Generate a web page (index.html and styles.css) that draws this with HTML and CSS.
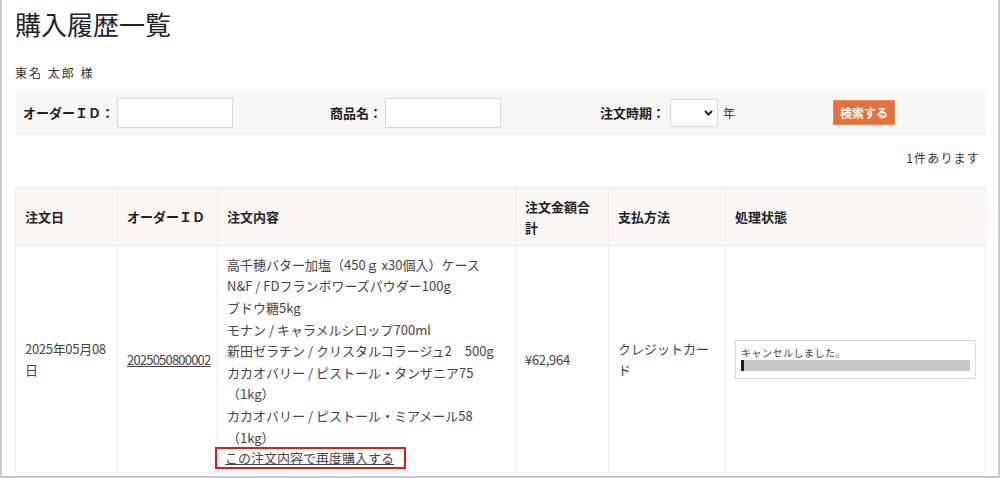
FILE: index.html
```html
<!DOCTYPE html>
<html lang="ja">
<head>
    <meta charset="UTF-8">
    <meta name="viewport" content="width=device-width, initial-scale=1.0">
    <title>購入履歴一覧</title>
    <link rel="stylesheet" href="styles.css">
</head>
<body>
    <div class="frame">
        <h1 class="page-title">購入履歴一覧</h1>
        <p class="customer">東名 太郎 様</p>

        <form class="search">
            <div class="field">
                <label>オーダーＩＤ：</label>
                <input type="text" class="text-input">
            </div>
            <div class="field">
                <label>商品名：</label>
                <input type="text" class="text-input">
            </div>
            <div class="field">
                <label>注文時期：</label>
                <span class="select-wrap">
                    <select class="year-select"><option></option></select>
                    <svg class="chevron" width="9" height="6" viewBox="0 0 9 6"><path d="M1 1l3.5 3.5L8 1" fill="none" stroke="#222" stroke-width="2"/></svg>
                </span>
                <span class="unit">年</span>
            </div>
            <div class="field">
                <button type="button" class="search-btn">検索する</button>
            </div>
        </form>

        <p class="count">1件あります</p>

        <table class="history">
            <colgroup>
                <col style="width:102px">
                <col style="width:100px">
                <col style="width:298px">
                <col style="width:93px">
                <col style="width:117px">
                <col>
            </colgroup>
            <thead>
                <tr>
                    <th>注文日</th>
                    <th>オーダーＩＤ</th>
                    <th>注文内容</th>
                    <th>注文金額合計</th>
                    <th>支払方法</th>
                    <th>処理状態</th>
                </tr>
            </thead>
            <tbody>
                <tr>
                    <td class="date">2025年05月08日</td>
                    <td><a href="#" class="order-link">2025050800002</a></td>
                    <td class="items">
                        <ul class="item-list">
                            <li>高千穂バター加塩（450ｇ x30個入）ケース</li>
                            <li>N&amp;F / FDフランボワーズパウダー100g</li>
                            <li>ブドウ糖5kg</li>
                            <li>モナン / キャラメルシロップ700ml</li>
                            <li>新田ゼラチン / クリスタルコラージュ2　500g</li>
                            <li>カカオバリー / ピストール・タンザニア75（1kg）</li>
                            <li>カカオバリー / ピストール・ミアメール58（1kg）</li>
                        </ul>
                        <a href="#" class="reorder">この注文内容で再度購入する</a>
                    </td>
                    <td class="price">¥62,964</td>
                    <td>クレジットカード</td>
                    <td>
                        <div class="status">
                            <p class="status-text">キャンセルしました。</p>
                            <div class="progress"><span class="progress-fill"></span></div>
                        </div>
                    </td>
                </tr>
            </tbody>
        </table>
    </div>
</body>
</html>
```

FILE: styles.css
```css
* {
    margin: 0;
    padding: 0;
    box-sizing: border-box;
}

body {
    font-family: "Noto Sans CJK JP", "Noto Sans", sans-serif;
    color: #333;
    background: #fff;
}

a {
    color: inherit;
}

.frame {
    width: 1000px;
    height: 478px;
    border: 2px solid #c8c8c8;
    border-top: none;
    padding: 0 12px 0 13px;
    overflow: hidden;
}

.page-title {
    padding-top: 8px;
    font-size: 26px;
    font-weight: normal;
    line-height: 32px;
    color: #222;
}

.customer {
    margin-top: 24px;
    font-size: 12px;
    line-height: 18px;
    letter-spacing: 2px;
}

/* 検索フォーム */
.search {
    display: grid;
    grid-template-columns: 307px 270px 233px 1fr;
    align-items: center;
    height: 45px;
    margin-top: 8px;
    padding-left: 8px;
    background: #f7f7f7;
}

.field {
    display: flex;
    align-items: center;
}

.field label {
    font-size: 13px;
    font-weight: bold;
    color: #222;
    margin-right: 3px;
}

.text-input {
    width: 116px;
    height: 30px;
    border: 1px solid #d9d9d9;
    background: #fff;
}

.select-wrap {
    position: relative;
    display: inline-block;
    margin-left: 2px;
}

.year-select {
    appearance: none;
    -webkit-appearance: none;
    display: block;
    width: 48px;
    height: 28px;
    border: 1px solid #d9d9d9;
    border-radius: 2px;
    background: #fff;
}

.chevron {
    position: absolute;
    right: 5px;
    top: 11px;
}

.unit {
    font-size: 12px;
    margin-left: 5px;
}

.search-btn {
    width: 62px;
    height: 25px;
    background: #e8703a;
    color: #fff;
    border: 1px solid #ef8a5c;
    font-family: inherit;
    font-size: 12px;
    font-weight: bold;
}

.count {
    margin-top: 14px;
    text-align: right;
    padding-right: 6px;
    font-size: 12px;
    line-height: 18px;
    letter-spacing: 1.2px;
}

/* 履歴テーブル */
.history {
    width: 971px;
    margin-top: 20px;
    border-collapse: collapse;
    table-layout: fixed;
    font-size: 13px;
}

.history th,
.history td {
    border: 1px solid #eee;
    padding: 0 9px;
    text-align: left;
    vertical-align: middle;
    line-height: 21px;
}

.history th {
    height: 58px;
    background: #faf7f4;
    font-weight: bold;
    color: #222;
}

.history td {
    height: 227px;
    color: #444;
}

.history td.date {
    letter-spacing: -0.3px;
}

.order-link {
    letter-spacing: -0.8px;
}

.history td.price {
    letter-spacing: -0.3px;
}

.history td.items {
    padding: 7px 9px 4px;
}

.item-list {
    list-style: none;
}

.item-list li {
    line-height: 21.6px;
}

.reorder {
    display: block;
    width: fit-content;
    line-height: 16px;
    padding: 1px 10px 1px 8px;
    margin: 1px 0 0 -10px;
    outline: 2px solid #f0140c;
}

.status {
    border: 1px solid #ddd;
    box-shadow: 0 0 2px rgba(0, 0, 0, 0.08);
    padding: 5px 5px 7px;
}

.status-text {
    font-size: 10px;
    line-height: 14px;
    letter-spacing: 0.5px;
}

.progress {
    height: 11px;
    background: #c8c8c8;
}

.progress-fill {
    display: block;
    width: 3px;
    height: 100%;
    background: #141a45;
}
```
